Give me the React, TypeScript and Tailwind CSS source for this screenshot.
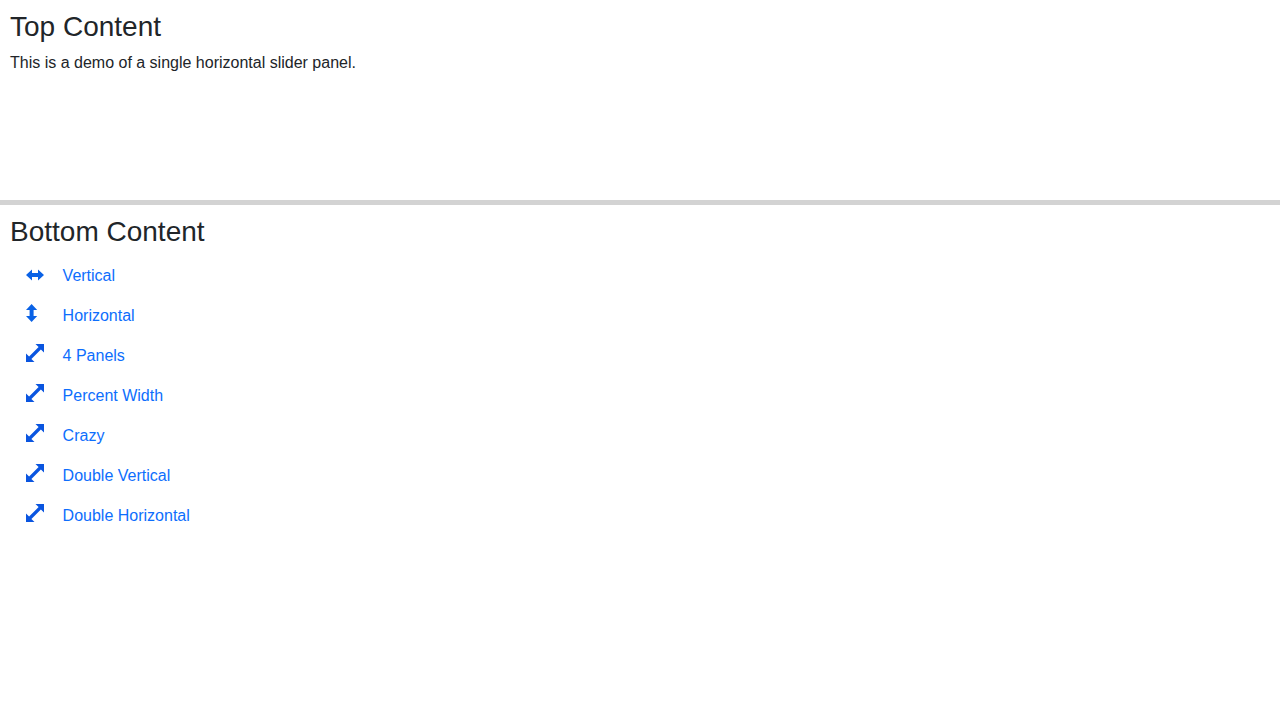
function ArrowH() {
  return (
    <svg viewBox="0 0 18 18" className="h-[18px] w-[18px] fill-current">
      <path d="M0 9 6 3.6V7H12V3.6L18 9 12 14.4V11H6V14.4Z" />
    </svg>
  );
}

function ArrowV() {
  return (
    <svg viewBox="0 0 18 18" className="h-[18px] w-[18px] fill-current">
      <path d="M5.6 0 11.2 6H7.6V12H11.2L5.6 18 0 12H3.6V6H0Z" />
    </svg>
  );
}

function Expand() {
  return (
    <svg viewBox="0 0 18 18" className="h-[18px] w-[18px] fill-current">
      <path d="M18 0V8.5L14.9 5.4 5.4 14.9 8.5 18H0V9.5L3.1 12.6 12.6 3.1 9.5 0Z" />
    </svg>
  );
}

const links = [
  { label: "Vertical", icon: <span className="flex w-[36.6px] pb-[2px] text-[#0a62e6]"><ArrowH /></span> },
  { label: "Horizontal", icon: <span className="flex w-[36.6px] pb-[6px] text-[#0a62e6]"><ArrowV /></span> },
  { label: "4 Panels", icon: <span className="flex w-[36.6px] pb-[6px] text-[#0a55e0]"><Expand /></span> },
  { label: "Percent Width", icon: <span className="flex w-[36.6px] pb-[6px] text-[#0a55e0]"><Expand /></span> },
  { label: "Crazy", icon: <span className="flex w-[36.6px] pb-[6px] text-[#0a55e0]"><Expand /></span> },
  { label: "Double Vertical", icon: <span className="flex w-[36.6px] pb-[6px] text-[#0a55e0]"><Expand /></span> },
  { label: "Double Horizontal", icon: <span className="flex w-[36.6px] pb-[6px] text-[#0a55e0]"><Expand /></span> },
];

export default function App() {
  return (
    <div className="h-screen overflow-hidden bg-white font-['Liberation_Sans',Arial,sans-serif] text-base text-[#212529]">
      {/* Top panel */}
      <div className="h-[205px] border-b-[5px] border-[#d3d3d3] p-2.5">
        <h3 className="mb-[7px] text-[28px] leading-[1.2] font-medium">Top Content</h3>
        <p className="leading-6">This is a demo of a single horizontal slider panel.</p>
      </div>

      {/* Bottom panel */}
      <div className="p-2.5">
        <h3 className="mb-[7.4px] text-[28px] leading-[1.2] font-medium">Bottom Content</h3>
        <ul className="pl-4">
          {links.map(({ label, icon }) => (
            <li key={label} className="flex h-10 items-center">
              {icon}
              <a href="#" className="text-[#0d6efd]">{label}</a>
            </li>
          ))}
        </ul>
      </div>
    </div>
  );
}
